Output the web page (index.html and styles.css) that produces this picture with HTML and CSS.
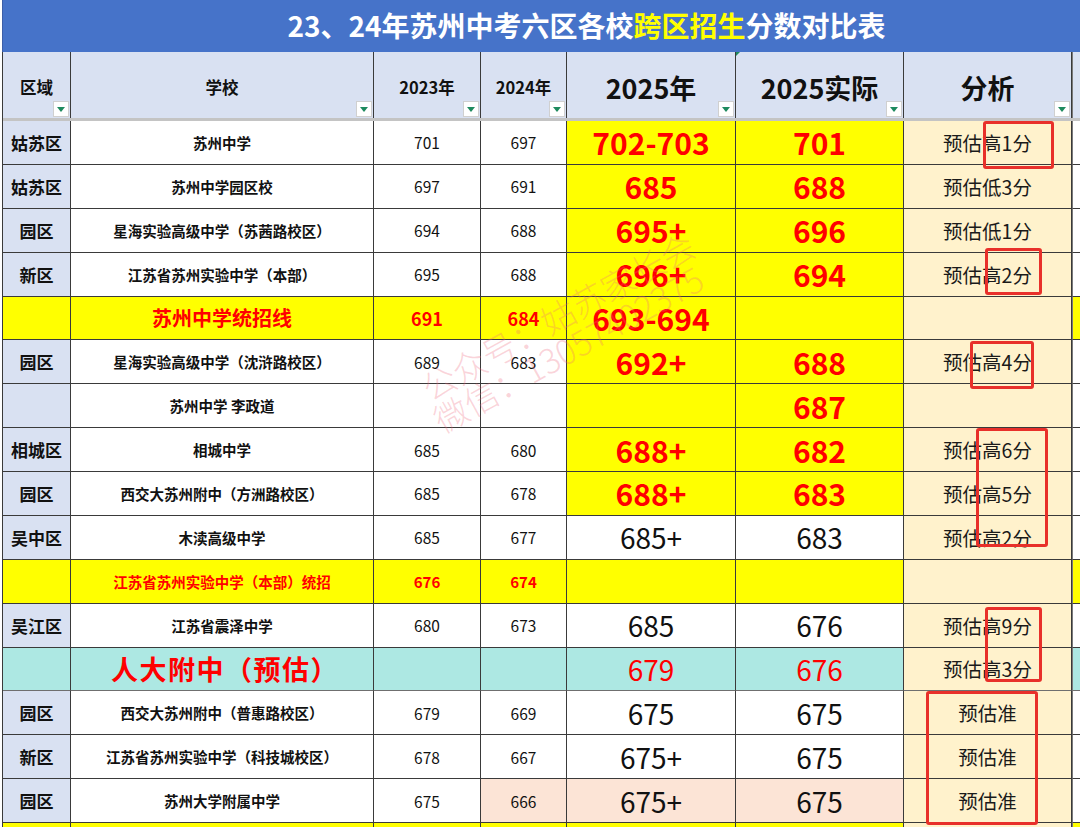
FILE: index.html
```html
<!DOCTYPE html>
<html lang="zh-CN">
<head>
<meta charset="utf-8">
<title>23、24年苏州中考六区各校跨区招生分数对比表</title>
<link rel="stylesheet" href="styles.css">
</head>
<body>
<div class="page">
  <div class="title">23、24年苏州中考六区各校<span class="hl">跨区招生</span>分数对比表</div>
  <div class="sheet">
    <div class="c h hs">区域<span class="flt"></span></div>
    <div class="c h hs">学校<span class="flt"></span></div>
    <div class="c h hs">2023年<span class="flt"></span></div>
    <div class="c h hs">2024年<span class="flt"></span></div>
    <div class="c h hl2">2025年<span class="flt"></span></div>
    <div class="c h hl2"><span class="corner"></span>2025实际<span class="flt"></span></div>
    <div class="c h hl2">分析<span class="flt"></span></div>
    <div class="c h edge"></div>

    <div class="freeze"></div>

    <div class="c reg">姑苏区</div><div class="c sch">苏州中学</div><div class="c n">701</div><div class="c n">697</div><div class="c y big">702-703</div><div class="c y big">701</div><div class="c ana">预估高1分</div><div class="c edge"></div>

    <div class="c reg">姑苏区</div><div class="c sch">苏州中学园区校</div><div class="c n">697</div><div class="c n">691</div><div class="c y big">685</div><div class="c y big">688</div><div class="c ana">预估低3分</div><div class="c edge"></div>

    <div class="c reg">园区</div><div class="c sch">星海实验高级中学（苏茜路校区）</div><div class="c n">694</div><div class="c n">688</div><div class="c y big">695+</div><div class="c y big">696</div><div class="c ana">预估低1分</div><div class="c edge"></div>

    <div class="c reg">新区</div><div class="c sch">江苏省苏州实验中学（本部）</div><div class="c n">695</div><div class="c n">688</div><div class="c y big">696+</div><div class="c y big">694</div><div class="c ana">预估高2分</div><div class="c edge"></div>

    <div class="c y"></div><div class="c y line1">苏州中学统招线</div><div class="c y rn">691</div><div class="c y rn">684</div><div class="c y big">693-694</div><div class="c y"></div><div class="c ana"></div><div class="c edge y"></div>

    <div class="c reg">园区</div><div class="c sch">星海实验高级中学（沈浒路校区）</div><div class="c n">689</div><div class="c n">683</div><div class="c y big">692+</div><div class="c y big">688</div><div class="c ana">预估高4分</div><div class="c edge"></div>

    <div class="c reg"></div><div class="c sch">苏州中学 李政道</div><div class="c n"></div><div class="c n"></div><div class="c y"></div><div class="c y big">687</div><div class="c ana"></div><div class="c edge"></div>

    <div class="c reg">相城区</div><div class="c sch">相城中学</div><div class="c n">685</div><div class="c n">680</div><div class="c y big">688+</div><div class="c y big">682</div><div class="c ana">预估高6分</div><div class="c edge"></div>

    <div class="c reg">园区</div><div class="c sch">西交大苏州附中（方洲路校区）</div><div class="c n">685</div><div class="c n">678</div><div class="c y big">688+</div><div class="c y big">683</div><div class="c ana">预估高5分</div><div class="c edge"></div>

    <div class="c reg">吴中区</div><div class="c sch">木渎高级中学</div><div class="c n">685</div><div class="c n">677</div><div class="c bign">685+</div><div class="c bign">683</div><div class="c ana">预估高2分</div><div class="c edge"></div>

    <div class="c y"></div><div class="c y line2">江苏省苏州实验中学（本部）统招</div><div class="c y rn2">676</div><div class="c y rn2">674</div><div class="c y"></div><div class="c y"></div><div class="c ana"></div><div class="c edge y"></div>

    <div class="c reg">吴江区</div><div class="c sch">江苏省震泽中学</div><div class="c n">680</div><div class="c n">673</div><div class="c bign">685</div><div class="c bign">676</div><div class="c ana">预估高9分</div><div class="c edge"></div>

    <div class="c t gt"></div><div class="c t gt rdf">人大附中（预估）</div><div class="c t gt"></div><div class="c t gt"></div><div class="c t gt bign red">679</div><div class="c t gt bign red">676</div><div class="c ana gt">预估高3分</div><div class="c edge t gt"></div>

    <div class="c reg">园区</div><div class="c sch">西交大苏州附中（普惠路校区）</div><div class="c n">679</div><div class="c n">669</div><div class="c bign">675</div><div class="c bign">675</div><div class="c ana">预估准</div><div class="c edge"></div>

    <div class="c reg">新区</div><div class="c sch">江苏省苏州实验中学（科技城校区）</div><div class="c n">678</div><div class="c n">667</div><div class="c bign">675+</div><div class="c bign">675</div><div class="c ana">预估准</div><div class="c edge"></div>

    <div class="c reg">园区</div><div class="c sch">苏州大学附属中学</div><div class="c n">675</div><div class="c n p">666</div><div class="c bign p">675+</div><div class="c bign p">675</div><div class="c ana">预估准</div><div class="c edge"></div>

    <div class="c y"></div><div class="c y"></div><div class="c y"></div><div class="c y"></div><div class="c y"></div><div class="c y"></div><div class="c ana"></div><div class="c edge y"></div>
  </div>

  <div class="wm wm1">公众号：姑苏家长会</div>
  <div class="wm wm2">微信：13057402375</div>

  <div class="mark m1"></div>
  <div class="mark m2"></div>
  <div class="mark m3"></div>
  <div class="mark m4"></div>
  <div class="mark m5"></div>
  <div class="mark m6"></div>
</div>
</body>
</html>
```

FILE: styles.css
```css
html, body {
  margin: 0;
  padding: 0;
  background: #ffffff;
  overflow: hidden;
}

body {
  width: 1080px;
  height: 827px;
  font-family: "Noto Sans CJK SC", "Microsoft YaHei", sans-serif;
  color: #111;
}

.page {
  position: relative;
  margin-left: 2px;
  width: 1078px;
  height: 827px;
  overflow: hidden;
}

.title {
  height: 52px;
  background: #4673c9;
  color: #ffffff;
  font-weight: 700;
  font-size: 28px;
  line-height: 50px;
  text-align: center;
  padding-left: 90px;
  box-sizing: border-box;
  white-space: nowrap;
  border-left: 1px solid #3c5ea8;
}

.title .hl {
  color: #ffff00;
}

.sheet {
  display: grid;
  grid-template-columns: 68px 303px 107px 86px 169px 168px 168px 60px;
  grid-template-rows: 66px 3px repeat(17, 43.875px);
  border-left: 1px solid #3a3a3a;
}

.c {
  display: flex;
  align-items: center;
  justify-content: center;
  box-sizing: border-box;
  border-right: 1px solid #3a3a3a;
  border-bottom: 1px solid #3a3a3a;
  background: #ffffff;
  white-space: nowrap;
  overflow: hidden;
}

.freeze {
  grid-column: 1 / -1;
  background: #c4c4c4;
}

.h {
  position: relative;
  background: #d9e1f2;
  font-weight: 700;
  border-bottom: none;
  padding-top: 4px;
}

.hs {
  font-size: 16.5px;
}

.hl2 {
  font-size: 27px;
}

.flt {
  position: absolute;
  right: 1px;
  bottom: 1px;
  width: 16px;
  height: 16px;
  background: #ffffff;
  border: 1px solid #d0d0d0;
  box-sizing: border-box;
}

.flt::after {
  content: "";
  position: absolute;
  left: 3px;
  top: 5px;
  border-left: 4px solid transparent;
  border-right: 4px solid transparent;
  border-top: 5px solid #1e8a5e;
}

.corner {
  position: absolute;
  left: 0;
  top: 0;
  border-top: 4px solid #1e8a5e;
  border-right: 4px solid transparent;
}

.edge {
  border-left: 1px solid #7a7a7a;
}

.h.edge {
  background: #d9e1f2;
}

.reg {
  background: #d9e1f2;
  font-weight: 700;
  font-size: 17px;
}

.sch {
  font-weight: 700;
  font-size: 14.5px;
}

.n {
  font-size: 15.5px;
}

.big {
  font-weight: 700;
  font-size: 30px;
  color: #ff0000;
}

.bign {
  font-size: 28px;
  color: #111;
}

.bign.red {
  color: #ff0000;
}

.ana {
  background: #fff2cc;
  font-size: 19.5px;
  color: #1a1a1a;
}

.y {
  background: #ffff00;
}

.t {
  background: #ade8e3;
}

.p {
  background: #fce4d6;
}

.gt {
  border-bottom-color: #6f6f6f;
}

.line1 {
  color: #ff0000;
  font-weight: 700;
  font-size: 20px;
}

.rn {
  color: #ff0000;
  font-weight: 700;
  font-size: 18px;
}

.line2 {
  color: #ff0000;
  font-weight: 700;
  font-size: 14.5px;
}

.rn2 {
  color: #ff0000;
  font-weight: 700;
  font-size: 15px;
}

.rdf {
  color: #ff0000;
  font-weight: 700;
  font-size: 27px;
  letter-spacing: 1.5px;
  justify-content: flex-start;
  padding-left: 40px;
}

.wm {
  position: absolute;
  font-size: 34px;
  line-height: 40px;
  font-weight: 300;
  color: rgba(238, 105, 125, 0.28);
  white-space: nowrap;
  transform-origin: left center;
  transform: rotate(-29deg);
  pointer-events: none;
}

.wm1 {
  left: 422px;
  top: 370px;
}

.wm2 {
  left: 434px;
  top: 402px;
}

.mark {
  position: absolute;
  border: 3px solid #e8302a;
  border-radius: 3px;
  box-sizing: border-box;
}

.m1 { left: 981px; top: 121px; width: 71px; height: 48px; }
.m2 { left: 983px; top: 248px; width: 57px; height: 47px; }
.m3 { left: 968px; top: 341px; width: 64px; height: 48px; }
.m4 { left: 974px; top: 428px; width: 72px; height: 119px; }
.m5 { left: 983px; top: 607px; width: 57px; height: 75px; }
.m6 { left: 924px; top: 691px; width: 112px; height: 134px; }
```
